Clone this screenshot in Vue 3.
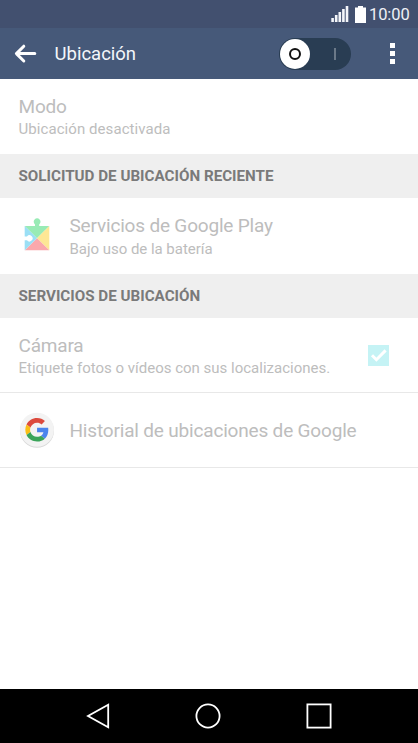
<template>
  <div class="screen">
    <header class="status-bar">
      <svg class="status-bar__signal" width="18" height="18" viewBox="0 0 18 18">
        <rect
          v-for="(h, i) in signalBars"
          :key="i"
          :x="i * 3.6 + 0.3"
          :y="17 - h"
          width="2.6"
          :height="h"
          fill="#f4f6fa"
        />
      </svg>
      <svg class="status-bar__battery" width="11" height="17" viewBox="0 0 11 17">
        <path d="M3 0h5v1.6h3V17H0V1.6h3z" fill="#fff" />
      </svg>
      <span class="status-bar__time">10:00</span>
    </header>

    <div class="app-bar">
      <svg class="app-bar__back" width="24" height="20" viewBox="0 0 24 20">
        <path
          d="M10.8 2.2 3.4 9.6l7.4 7.4M3.4 9.6h18.4"
          fill="none"
          stroke="#fff"
          stroke-width="3"
          stroke-linecap="round"
          stroke-linejoin="round"
        />
      </svg>
      <h1 class="app-bar__title">Ubicación</h1>
      <button class="toggle" type="button" :aria-pressed="enabled" @click="enabled = !enabled">
        <span class="toggle__knob"><span class="toggle__ring" /></span>
        <span class="toggle__line" />
      </button>
      <span class="app-bar__menu"><i /><i /><i /></span>
    </div>

    <main class="content">
      <section class="row row--mode">
        <div class="row__text">
          <div class="row__title">Modo</div>
          <div class="row__summary mode-summary">Ubicación desactivada</div>
        </div>
      </section>

      <h2 class="category">SOLICITUD DE UBICACIÓN RECIENTE</h2>

      <section class="row row--service">
        <svg class="row__icon" width="36" height="36" viewBox="0 0 36 36">
          <path d="M5.7 8h24.6L18 20.2z" fill="#98ebb5" />
          <path d="M16 9V6.4a3.4 3.4 0 1 1 4.2 0V9z" fill="#98ebb5" />
          <path d="M30.3 8v24.2L18 20.2z" fill="#fde795" />
          <path d="M30.3 32.2H5.7L18 20.2z" fill="#faa8ac" />
          <path d="M5.7 8 18 20.2 5.7 32.2z" fill="#9bdff5" />
          <path d="M5 18.4h3a3.1 3.1 0 1 1 0 3.8H5z" fill="#fff" />
        </svg>
        <div class="row__text">
          <div class="row__title">Servicios de Google Play</div>
          <div class="row__summary service-summary">Bajo uso de la batería</div>
        </div>
      </section>

      <h2 class="category">SERVICIOS DE UBICACIÓN</h2>

      <section class="row row--line row--camera">
        <div class="row__text">
          <div class="row__title">Cámara</div>
          <div class="row__summary">
            Etiquete fotos o vídeos con sus localizaciones.
          </div>
        </div>
        <svg class="row__check" width="21" height="21" viewBox="0 0 21 21">
          <rect width="21" height="21" fill="#c5f3f5" />
          <path d="m4 10.2 4.4 4.5L17.6 5.4" fill="none" stroke="#fff" stroke-width="3" />
        </svg>
      </section>

      <section class="row row--line">
        <svg class="row__icon" width="36" height="36" viewBox="0 0 36 36">
          <circle cx="18" cy="18.7" r="17" fill="#d8d8d8" />
          <circle cx="18" cy="17.8" r="17" fill="#f3f3f3" />
          <g transform="translate(6.3 6) scale(.49)">
            <path
              d="M24 9.5c3.54 0 6.71 1.22 9.21 3.6l6.85-6.85C35.9 2.38 30.47 0 24 0 14.62 0 6.51 5.38 2.56 13.22l7.98 6.19C12.43 13.72 17.74 9.5 24 9.5z"
              fill="#dc4a3d"
            />
            <path
              d="M46.98 24.55c0-1.57-.15-3.09-.38-4.55H24v9.02h12.94c-.58 2.96-2.26 5.48-4.78 7.18l7.73 6c4.51-4.18 7.09-10.36 7.09-17.65z"
              fill="#4a84ed"
            />
            <path
              d="M10.53 28.59A14.5 14.5 0 0 1 9.77 24c0-1.6.27-3.14.76-4.59l-7.98-6.19A24 24 0 0 0 0 24c0 3.88.92 7.54 2.56 10.78z"
              fill="#fbbe16"
            />
            <path
              d="M24 48c6.48 0 11.93-2.13 15.89-5.81l-7.73-6c-2.15 1.45-4.92 2.3-8.16 2.3-6.26 0-11.57-4.22-13.47-9.91l-7.98 6.19C6.51 42.62 14.62 48 24 48z"
              fill="#3aa459"
            />
          </g>
        </svg>
        <div class="row__text">
          <div class="row__title">Historial de ubicaciones de Google</div>
        </div>
      </section>
    </main>

    <nav class="nav-bar">
      <svg width="26" height="28" viewBox="0 0 26 28">
        <path d="M23.2 2.8v22.4L3 14z" fill="none" stroke="#fff" stroke-width="1.8" />
      </svg>
      <svg width="28" height="28" viewBox="0 0 28 28">
        <circle cx="14" cy="14" r="11.6" fill="none" stroke="#fff" stroke-width="1.8" />
      </svg>
      <svg width="28" height="28" viewBox="0 0 28 28">
        <rect x="2.4" y="2.4" width="23.2" height="23.2" fill="none" stroke="#fff" stroke-width="1.8" />
      </svg>
    </nav>
  </div>
</template>

<script setup>
import { ref } from 'vue'

const signalBars = [4, 7, 10, 13, 16]
const enabled = ref(false)
</script>

<style>
body {
  margin: 0;
}
</style>

<style scoped>
.screen {
  display: flex;
  flex-direction: column;
  height: 743px;
  overflow: hidden;
  background: #fff;
  font-family: Roboto, 'Liberation Sans', sans-serif;
}

.screen * {
  box-sizing: border-box;
}

.screen svg {
  display: block;
  flex: none;
}

.status-bar {
  display: flex;
  align-items: center;
  justify-content: flex-end;
  flex: none;
  height: 28px;
  padding-right: 8px;
  background: #42506f;
  color: #eef1f6;
}

.status-bar__signal {
  margin-right: 6px;
}

.status-bar__battery {
  margin-right: 3px;
}

.status-bar__time {
  width: 41px;
  padding-top: 2px;
  font-size: 16.5px;
  line-height: 20px;
  letter-spacing: -0.1px;
  white-space: nowrap;
}

.app-bar {
  display: flex;
  align-items: center;
  flex: none;
  height: 51px;
  padding: 0 23px 0 13px;
  background: #465979;
}

.app-bar__title {
  flex: 1;
  margin: 1px 0 0 17.5px;
  color: #f4f6fa;
  font-size: 18.5px;
  font-weight: 400;
  line-height: 24px;
}

.toggle {
  display: flex;
  align-items: center;
  width: 72px;
  height: 32px;
  margin-right: 39px;
  padding: 0 15px 0 1px;
  border: 0;
  border-radius: 16px;
  background: #293d53;
}

.toggle__knob {
  display: flex;
  align-items: center;
  justify-content: center;
  width: 30px;
  height: 30px;
  border-radius: 50%;
  background: #fff;
}

.toggle__ring {
  width: 12px;
  height: 12px;
  border: 2px solid #111;
  border-radius: 50%;
}

.toggle__line {
  width: 2px;
  height: 12px;
  margin-left: auto;
  background: #6b7988;
}

.app-bar__menu {
  display: flex;
  flex-direction: column;
  gap: 3px;
}

.app-bar__menu i {
  width: 5px;
  height: 5px;
  background: #fff;
}

.content {
  flex: 1;
}

.row {
  display: flex;
  align-items: center;
  height: 75px;
  padding: 0 29px 0 18.5px;
  color: #bdbdbd;
}

.row--service {
  height: 76px;
}

.row--line {
  border-bottom: 1px solid #e8e8e8;
}

.row__icon {
  margin-right: 15px;
}

.row__text {
  flex: 1;
  padding-top: 1px;
}

.row--mode .row__text {
  padding-top: 2px;
}

.row--camera .row__text {
  padding-top: 2px;
}

.row__title {
  font-size: 19px;
  line-height: 24px;
  letter-spacing: -0.18px;
  white-space: nowrap;
}

.row__summary {
  font-size: 15px;
  line-height: 22px;
  white-space: nowrap;
}

.row--mode .row__summary,
.row--camera .row__summary {
  line-height: 21px;
}

.mode-summary {
  letter-spacing: 0.07px;
}

.service-summary {
  letter-spacing: -0.03px;
}

.category {
  height: 44px;
  margin: 0;
  padding-left: 18.5px;
  background: #efefef;
  color: #7a7a7a;
  font-size: 15.2px;
  font-weight: 700;
  line-height: 45px;
}

.nav-bar {
  display: flex;
  align-items: center;
  justify-content: space-between;
  flex: none;
  height: 54px;
  padding: 0 85px;
  background: #000;
}
</style>
